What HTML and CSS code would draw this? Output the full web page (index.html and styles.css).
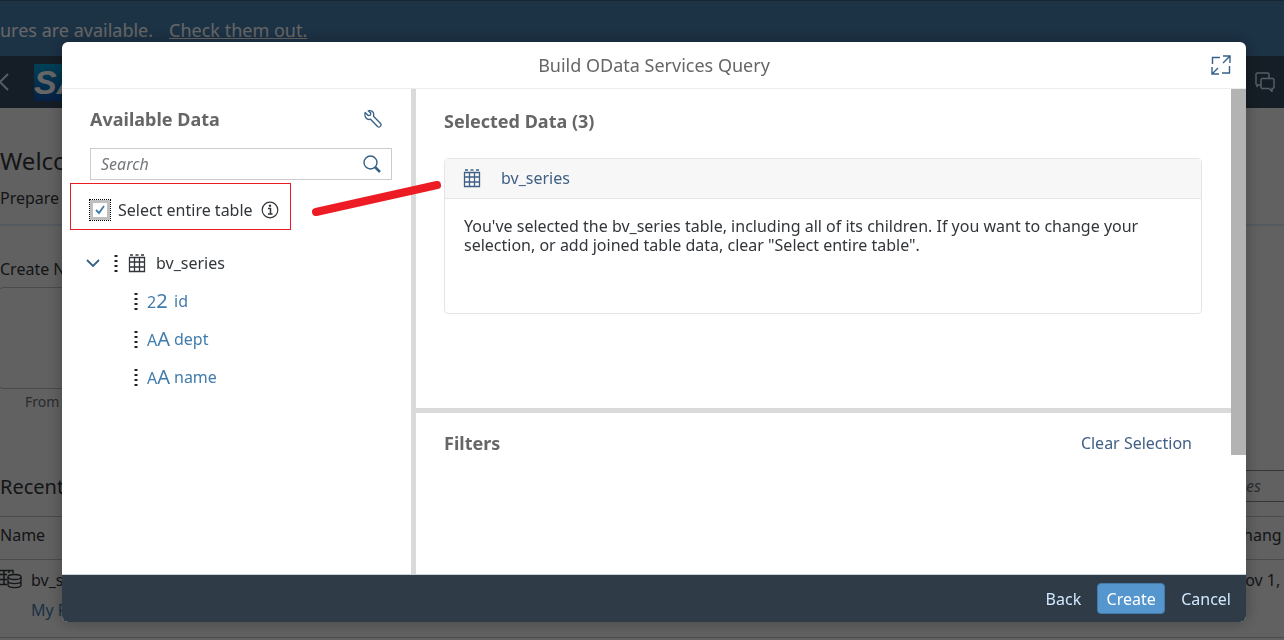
FILE: index.html
```html
<!DOCTYPE html>
<html lang="en">

<head>
    <meta charset="UTF-8">
    <meta name="viewport" content="width=device-width, initial-scale=1.0">
    <title>Build OData Services Query</title>
    <link rel="stylesheet" href="styles.css">
</head>

<body>
    <svg class="sprite" aria-hidden="true">
        <symbol id="icon-table" viewBox="0 0 18 20">
            <path d="M2 2h3M7.500 2h3M13 2h3M1.500 4.500h15v14h-15zM1.500 9h15M1.500 14h15M6.500 4v14.500M11.500 4v14.500" fill="none" stroke="currentColor" stroke-width="1.300" />
        </symbol>
        <symbol id="icon-drag" viewBox="0 0 4 18">
            <path d="M2 1v17" fill="none" stroke="#222" stroke-width="3" stroke-dasharray="2 3" />
        </symbol>
    </svg>

    <div class="page">
        <div class="banner">
            <span>ures are available.</span>
            <a href="#">Check them out.</a>
        </div>
        <header class="shell">
            <button class="shell-button" aria-label="Back">
                <svg width="10" height="18" viewBox="0 0 10 18"><path d="M8 1L0 9l8 8" fill="none" stroke="currentColor" stroke-width="2" /></svg>
            </button>
            <svg class="logo" width="74" height="37" viewBox="0 0 74 37" role="img" aria-label="SAP">
                <defs>
                    <linearGradient id="logo-fill" x1="0" y1="0" x2="0" y2="1">
                        <stop offset="0" stop-color="#00a2d8" />
                        <stop offset="1" stop-color="#1150a8" />
                    </linearGradient>
                </defs>
                <path d="M0 0h74L37 37H0z" fill="url(#logo-fill)" />
                <text class="logo-text" x="0" y="30">SAP</text>
            </svg>
            <button class="shell-button shell-chat" aria-label="Messages">
                <svg width="20" height="20" viewBox="0 0 20 20"><path d="M6 13H3l-1 2v-2l-1-1V2l1-1h11l1 1v4M7 6.500h11l1 1v8l-1 1h-1v3l-3-3H7l-1-1v-8z" fill="none" stroke="currentColor" stroke-width="1.500" /></svg>
            </button>
        </header>
        <section class="welcome">
            <h1>Welco</h1>
            <p>Prepare y</p>
        </section>
        <section class="create">
            <h2>Create N</h2>
            <div class="tile"></div>
            <p>From a</p>
        </section>
        <section class="recent">
            <div class="recent-head">
                <h2>Recent</h2>
                <input class="recent-search" type="text" placeholder="es" aria-label="Search files">
            </div>
            <table>
                <thead>
                    <tr>
                        <th>Name</th>
                        <th class="changed">Chang</th>
                    </tr>
                </thead>
                <tbody>
                    <tr>
                        <td>
                            <div class="file">
                                <svg width="22" height="20" viewBox="0 0 22 20"><path d="M0 1.500h13v3M0 5.500h7M0 10.500h7M0 15.500h7M4 1v14M9 1v3" fill="none" stroke="currentColor" stroke-width="1.500" /><path d="M8 8v8c0 3.500 13 3.500 13 0V8M8 12c0 3.500 13 3.500 13 0" fill="none" stroke="currentColor" stroke-width="1.300" /><ellipse cx="14.500" cy="8" rx="6.500" ry="2.500" fill="none" stroke="currentColor" stroke-width="1.300" /></svg>
                                <div>bv_s<br><a href="#">My F</a></div>
                            </div>
                        </td>
                        <td class="changed">Nov 1,</td>
                    </tr>
                </tbody>
            </table>
        </section>
    </div>

    <div class="overlay">
        <div class="dialog" role="dialog" aria-labelledby="dialog-title">
            <header class="dialog-header">
                <h2 id="dialog-title">Build OData Services Query</h2>
                <button class="icon-button expand" aria-label="Full screen">
                    <svg width="20" height="20" viewBox="0 0 20 20"><path d="M1.500 9V2.500H9M18.500 11v7H11M12 1h7v7M19 1l-7 7M1 12v7h7M1 19l6-6" fill="none" stroke="currentColor" stroke-width="1.400" /></svg>
                </button>
            </header>

            <div class="dialog-body">
                <aside class="available">
                    <div class="available-head">
                        <h3>Available Data</h3>
                        <button class="icon-button" aria-label="Settings">
                            <svg width="18" height="18" viewBox="0 0 18 18"><path d="M1.200 2.500l3 3 2.200-.4.400-2.200-2.600-2C8-.2 10.500 2.500 9.500 6.200l7.300 7.600c1 1.800-1.200 4-3 3L6.500 9.200C3 10.500 0 7 1.200 2.500z" fill="none" stroke="currentColor" stroke-width="1.300" stroke-linejoin="round" /></svg>
                        </button>
                    </div>
                    <div class="search">
                        <input type="text" placeholder="Search" aria-label="Search">
                        <button class="icon-button" aria-label="Find">
                            <svg width="18" height="18" viewBox="0 0 18 18"><circle cx="7.500" cy="7.500" r="6.500" fill="none" stroke="currentColor" stroke-width="1.400" /><path d="M12 12l5 5" fill="none" stroke="currentColor" stroke-width="2.500" /></svg>
                        </button>
                    </div>
                    <div class="select-all">
                        <input type="checkbox" id="select-all" checked>
                        <label for="select-all">Select entire table</label>
                        <svg width="18" height="18" viewBox="0 0 18 18"><circle cx="9" cy="9" r="7.800" fill="none" stroke="currentColor" stroke-width="1.200" /><path d="M7 7.500h2.500V13M7 13h4.500" fill="none" stroke="currentColor" stroke-width="1.500" /><circle cx="9" cy="4.800" r="1.200" fill="currentColor" /></svg>
                    </div>
                    <ul class="tree">
                        <li class="root">
                            <svg class="chevron" width="14" height="8" viewBox="0 0 14 8"><path d="M1 1l6 6 6-6" fill="none" stroke="currentColor" stroke-width="1.800" /></svg>
                            <svg class="drag" width="4" height="18"><use href="#icon-drag" /></svg>
                            <svg width="18" height="20"><use href="#icon-table" /></svg>
                            <span>bv_series</span>
                        </li>
                        <li>
                            <svg class="drag" width="4" height="18"><use href="#icon-drag" /></svg>
                            <span class="type"><small>2</small>2</span>
                            <a href="#">id</a>
                        </li>
                        <li>
                            <svg class="drag" width="4" height="18"><use href="#icon-drag" /></svg>
                            <span class="type"><small>A</small>A</span>
                            <a href="#">dept</a>
                        </li>
                        <li>
                            <svg class="drag" width="4" height="18"><use href="#icon-drag" /></svg>
                            <span class="type"><small>A</small>A</span>
                            <a href="#">name</a>
                        </li>
                    </ul>
                </aside>

                <div class="content">
                    <section class="selected">
                        <h3>Selected Data (3)</h3>
                        <div class="card">
                            <div class="card-head">
                                <svg width="18" height="20"><use href="#icon-table" /></svg>
                                <span>bv_series</span>
                            </div>
                            <p>You've selected the bv_series table, including all of its children. If you want to change your selection, or add joined table data, clear "Select entire table".</p>
                        </div>
                    </section>
                    <section class="filters">
                        <h3>Filters</h3>
                        <button class="clear">Clear Selection</button>
                    </section>
                </div>
                <div class="scrollbar">
                    <div class="thumb"></div>
                </div>
            </div>

            <footer class="dialog-footer">
                <button>Back</button>
                <button class="primary">Create</button>
                <button>Cancel</button>
            </footer>

            <svg class="marks" width="380" height="60" viewBox="0 0 380 60" aria-hidden="true">
                <rect x="0.500" y="3.500" width="220" height="46" fill="none" stroke="#ed1c24" />
                <path d="M246 32L367 5" stroke="#ed1c24" stroke-width="8" stroke-linecap="round" />
            </svg>
        </div>
    </div>
</body>

</html>
```

FILE: styles.css
```css
* {
    box-sizing: border-box;
}

body {
    margin: 0;
    font-family: "Noto Sans", sans-serif;
    font-size: 16px;
    color: #32363a;
    background-color: #f2f2f2;
    overflow: hidden;
}

h1, h2, h3, p, ul {
    margin: 0;
    padding: 0;
    font-weight: normal;
}

a {
    color: #427cac;
    text-decoration: none;
}

button, input {
    font-family: inherit;
    font-size: 16px;
}

button {
    padding: 0;
    border: none;
    background: none;
    cursor: pointer;
}

svg {
    display: block;
    flex-shrink: 0;
}

.sprite {
    position: absolute;
    width: 0;
    height: 0;
}

/* Page behind the dialog */
.page {
    height: 100vh;
    overflow: hidden;
    white-space: nowrap;
}

.banner {
    display: flex;
    gap: 16px;
    height: 56px;
    padding-top: 16px;
    line-height: 26px;
    font-size: 18px;
    color: #fff;
    border-top: 1px solid #35607f;
    background-color: #467dad;
}

.banner a {
    color: #fff;
    text-decoration: underline;
}

.shell {
    display: flex;
    align-items: center;
    height: 52px;
    color: #d1e8ff;
    background-color: #354a5f;
}

.shell-button {
    color: inherit;
}

.logo {
    margin-left: 24px;
}

.logo-text {
    font: italic bold 34px "Liberation Sans", sans-serif;
    fill: #fff;
}

.shell-chat {
    margin-left: auto;
    margin-right: 9px;
}

.welcome {
    height: 118px;
    padding-top: 36px;
    border-bottom: 2px solid #d1e0ee;
}

.welcome h1 {
    font-size: 24px;
    line-height: 34px;
}

.welcome p {
    line-height: 40px;
}

.create {
    height: 230px;
    padding-top: 31px;
}

.create h2 {
    font-size: 16px;
    line-height: 24px;
}

.tile {
    width: 160px;
    height: 102px;
    margin: 6px 0 0 -4px;
    border: 1px solid #bbb;
    border-radius: 8px;
}

.create p {
    padding-left: 25px;
    font-size: 14px;
    line-height: 26px;
    color: #6a6d70;
}

.recent-head {
    display: flex;
    align-items: center;
    justify-content: space-between;
    height: 60px;
}

.recent-head h2 {
    font-size: 20px;
}

.recent-search {
    width: 40px;
    height: 32px;
    border: 1px solid #888;
    border-width: 1px 0;
    background: none;
    font-style: italic;
}

table {
    width: 100%;
    table-layout: fixed;
    border-collapse: collapse;
}

th, td {
    padding: 0;
    text-align: left;
    font-weight: normal;
    border-top: 1px solid #bbb;
}

th {
    height: 43px;
    padding-bottom: 6px;
}

td {
    height: 78px;
    padding-top: 5px;
    vertical-align: top;
    line-height: 30px;
    border-bottom: 1px solid #bbb;
}

.changed {
    width: 51px;
}

.file {
    display: flex;
    gap: 9px;
}

.file svg {
    margin-top: 4px;
}

/* Dialog */
.overlay {
    position: fixed;
    inset: 0;
    display: flex;
    padding: 42px 38px 18px 62px;
    background-color: rgba(0, 0, 0, 0.6);
}

.dialog {
    position: relative;
    flex: 1;
    display: flex;
    flex-direction: column;
    border-radius: 6px;
    background-color: #fff;
    box-shadow: 0 0 16px rgba(0, 0, 0, 0.3);
}

.dialog-header {
    display: flex;
    align-items: center;
    height: 46px;
    padding: 0 15px;
}

.dialog-header h2 {
    flex: 1;
    padding-left: 20px;
    text-align: center;
    font-size: 18px;
    color: #666;
}

.icon-button {
    color: #346187;
}

.dialog-body {
    flex: 1;
    display: flex;
    border-top: 1px solid #ededed;
}

h3 {
    font-size: 18px;
    font-weight: bold;
    line-height: 24px;
    color: #666;
}

.available {
    width: 354px;
    padding: 18px 19px 0 28px;
    border-right: 5px solid #dadada;
}

.available-head {
    display: flex;
    align-items: center;
    justify-content: space-between;
    padding-right: 10px;
}

.search {
    display: flex;
    align-items: center;
    height: 32px;
    margin-top: 17px;
    padding: 0 10px;
    border: 1px solid #ccc;
}

.search input {
    flex: 1;
    min-width: 0;
    padding: 0;
    border: none;
    font-style: italic;
}

.search input::placeholder, .recent-search::placeholder {
    color: #74777a;
    opacity: 1;
}

.select-all {
    display: flex;
    align-items: center;
    gap: 8px;
    height: 60px;
}

.select-all input {
    appearance: none;
    width: 20px;
    height: 20px;
    margin: 0;
    border: 3px solid #bfbfbf;
    outline: 1px dotted #000;
    background: #fff url("data:image/svg+xml,%3Csvg xmlns='http://www.w3.org/2000/svg' viewBox='0 0 14 14'%3E%3Cpath d='M3 7l3 3 5-7' fill='none' stroke='%23427cac' stroke-width='1.800'/%3E%3C/svg%3E");
}

.tree {
    padding-top: 4px;
    list-style: none;
}

.tree li {
    display: flex;
    align-items: center;
    height: 38px;
    padding-left: 44px;
}

.tree .root {
    margin-left: -4px;
    padding-left: 0;
    gap: 10px;
}

.chevron {
    color: #346187;
    margin-right: 4px;
}

.type {
    width: 27px;
    margin-left: 9px;
    font-size: 20px;
    line-height: 24px;
    color: #427cac;
}

.type small {
    font-size: 16px;
}

.content {
    flex: 1;
    display: flex;
    flex-direction: column;
}

.selected {
    height: 324px;
    padding: 20px 29px 0 28px;
    border-bottom: 5px solid #dadada;
}

.card {
    height: 156px;
    margin-top: 25px;
    border: 1px solid #e5e5e5;
    border-radius: 4px;
}

.card-head {
    display: flex;
    align-items: center;
    gap: 20px;
    height: 40px;
    padding: 0 18px 2px;
    color: #3f5f85;
    border-bottom: 1px solid #e5e5e5;
    background-color: #f7f7f7;
}

.card p {
    padding: 18px 19px;
    line-height: 19px;
}

.filters {
    display: flex;
    align-items: center;
    justify-content: space-between;
    padding: 18px 39px 0 28px;
}

.clear {
    color: #3f5f85;
}

.scrollbar {
    width: 15px;
}

.thumb {
    height: 366px;
    background-color: #b3b3b3;
}

.dialog-footer {
    display: flex;
    align-items: center;
    justify-content: flex-end;
    gap: 16px;
    height: 48px;
    padding: 0 15px;
    border-top: 1px solid #c5d2dc;
    border-radius: 0 0 6px 6px;
    background-color: #2f3c48;
}

.dialog-footer button {
    height: 31px;
    color: #d1e8ff;
}

.dialog-footer .primary {
    width: 68px;
    color: #fff;
    border: 1px solid #427cac;
    border-radius: 4px;
    background-color: #5496cd;
}

/* Red highlight and pointer line */
.marks {
    position: absolute;
    left: 8px;
    top: 138px;
    pointer-events: none;
}
```
